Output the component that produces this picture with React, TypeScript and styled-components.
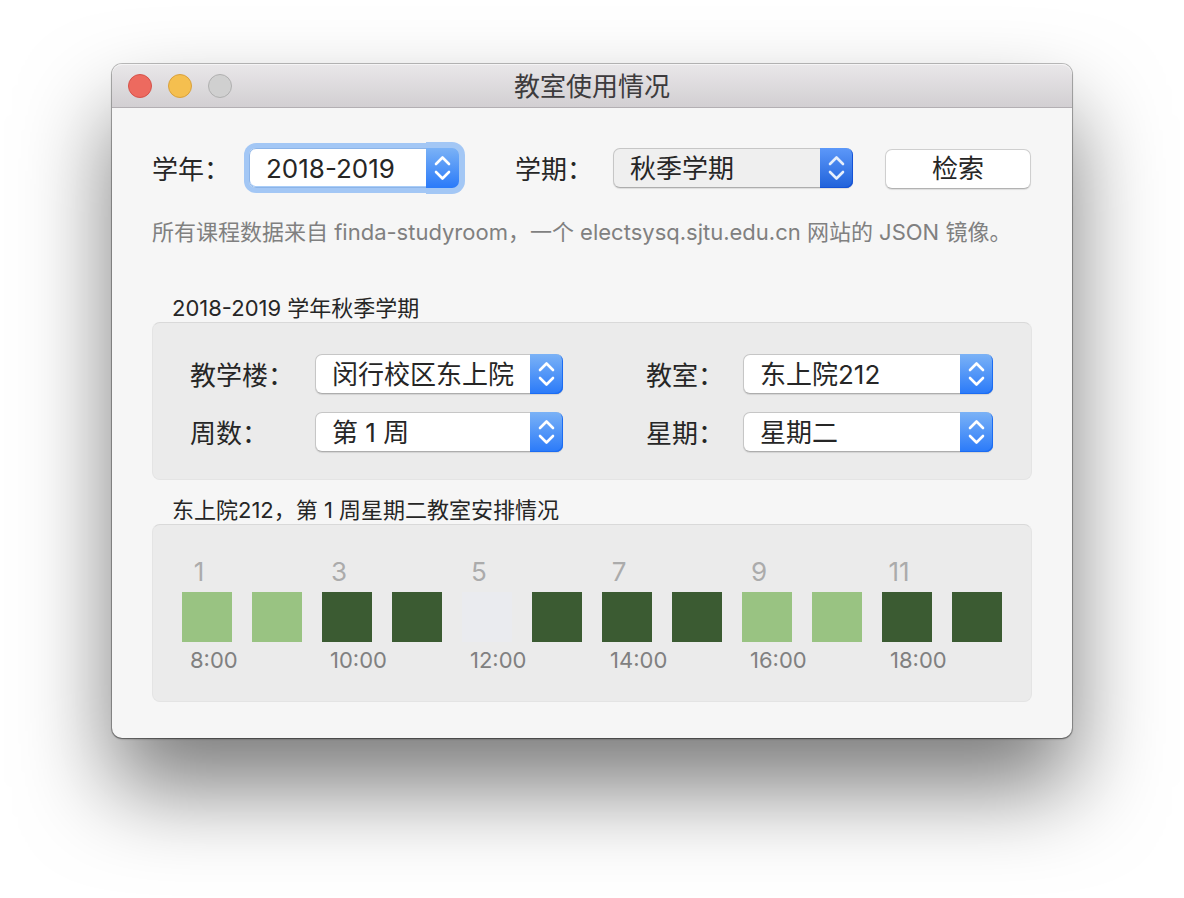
import React from "react";
import styled, { createGlobalStyle, css } from "styled-components";

const GlobalStyle = createGlobalStyle`
  *, *::before, *::after { box-sizing: border-box; }
  body {
    margin: 0;
    background: #ffffff;
    color: #262626;
    font-family: Inter, "Noto Sans CJK SC", sans-serif;
    font-size: 26px;
    line-height: 36px;
  }
`;

const Desktop = styled.div`
  padding: 64px 112px 160px;
`;

const Window = styled.main`
  border-radius: 10px;
  background: #f6f6f6;
  box-shadow:
    0 0 0 1px rgba(0, 0, 0, 0.24),
    0 1px 2px rgba(0, 0, 0, 0.4),
    0 50px 90px rgba(0, 0, 0, 0.52);
`;

const TitleBar = styled.header`
  display: grid;
  grid-template-columns: 1fr auto 1fr;
  align-items: center;
  height: 44px;
  padding: 0 16px;
  border-radius: 10px 10px 0 0;
  border-bottom: 1px solid #b3afb3;
  background: linear-gradient(#e9e7e9, #d2cfd2);
  box-shadow: inset 0 1px 0 #f5f4f5;
`;

const Lights = styled.div`
  display: flex;
  gap: 16px;
`;

const Light = styled.button<{ $fill: string; $edge: string }>`
  width: 24px;
  height: 24px;
  padding: 0;
  border: 1px solid ${(p) => p.$edge};
  border-radius: 50%;
  background: ${(p) => p.$fill};
`;

const Title = styled.h1`
  margin: 0;
  padding-top: 2px;
  color: #3d3b3d;
  font-size: 26px;
  font-weight: 400;
`;

const Content = styled.div`
  padding: 40px 40px 36px;
`;

const SearchForm = styled.form`
  display: grid;
  grid-template-columns: 97px 7fr 154px 8fr 178px;
  align-items: start;
  padding-right: 1px;
`;

const Label = styled.label<{ $indent?: number }>`
  padding-top: 5px;
  padding-left: ${(p) => p.$indent ?? 0}px;
  line-height: 34px;
  white-space: nowrap;
`;

const PopUp = styled.div<{ $focused?: boolean }>`
  position: relative;
  height: 40px;
  min-width: 0;
  border-radius: 7px;
  ${(p) =>
    p.$focused &&
    css`
      box-shadow: 0 0 0 5px #a3c7f5;
    `}
`;

const Select = styled.select<{ $pressed?: boolean; $focused?: boolean }>`
  appearance: none;
  display: block;
  width: 100%;
  height: 40px;
  padding: 2px 36px 0 16px;
  border: 1px solid #c6c6c6;
  border-bottom-color: #adadad;
  border-radius: 7px;
  outline: none;
  background: ${(p) => (p.$pressed ? "#efefef" : "#ffffff")};
  box-shadow: 0 1px 1px rgba(0, 0, 0, 0.1);
  color: #262626;
  font: inherit;
  ${(p) =>
    p.$focused &&
    css`
      border-color: #8cb4e8;
      box-shadow: inset 0 -1px 0 #a9cdf8;
    `}
`;

const Cap = styled.span<{ $pressed?: boolean; $focused?: boolean }>`
  position: absolute;
  top: 0;
  right: 0;
  display: flex;
  align-items: center;
  justify-content: center;
  width: 33px;
  height: 40px;
  border-radius: 0 7px 7px 0;
  background: ${(p) =>
    p.$pressed
      ? "linear-gradient(#5c98f9, #2062da)"
      : "linear-gradient(#7bb2f6, #2a7af9)"};
  box-shadow: inset -1px -1px 0 ${(p) => (p.$pressed ? "#1553d6" : "#1c6cf2")};
  pointer-events: none;
  ${(p) =>
    p.$focused &&
    css`
      box-shadow: 0 0 0 6px #a3c7f5;
      clip-path: inset(-6px -6px -6px 0);
    `}
`;

const SearchButton = styled.button`
  height: 40px;
  margin: 1px 0 0 32px;
  padding: 0;
  border: 1px solid #cfcfcf;
  border-bottom-color: #b2b2b2;
  border-radius: 7px;
  background: #ffffff;
  box-shadow: 0 1px 1px rgba(0, 0, 0, 0.1);
  color: #262626;
  font: inherit;
`;

const Note = styled.p`
  margin: 25px 0 0;
  color: #808080;
  font-size: 22px;
`;

const Group = styled.section<{ $gap: number }>`
  margin-top: ${(p) => p.$gap}px;
`;

const GroupTitle = styled.h2`
  margin: 0;
  padding-left: 20px;
  font-size: 22px;
  font-weight: 400;
  line-height: 28px;
`;

const Box = styled.div`
  border: 1px solid #e4e4e4;
  border-top-color: #d9d9d9;
  border-radius: 8px;
  background: #ebebeb;
`;

const Filters = styled(Box)`
  display: grid;
  grid-template-columns: 125px 124fr 180px 125fr;
  row-gap: 18px;
  padding: 31px 38px 27px 37px;
`;

const Schedule = styled(Box)`
  padding: 27px 29px;
`;

const Slots = styled.ol`
  display: grid;
  grid-template-columns: repeat(12, 1fr);
  gap: 20px;
  margin: 0;
  padding: 0;
  list-style: none;
`;

const Slot = styled.li`
  min-width: 0;
`;

const SlotNumber = styled.span`
  display: block;
  width: 34px;
  height: 40px;
  color: #ababab;
  line-height: 40px;
  text-align: center;
`;

const SlotSquare = styled.span<{ $color: string }>`
  display: block;
  aspect-ratio: 1;
  background: ${(p) => p.$color};
`;

const SlotTime = styled.time`
  display: block;
  height: 32px;
  padding-left: 8px;
  color: #808080;
  font-size: 22px;
  white-space: nowrap;
`;

type PickerProps = {
  id: string;
  label: string;
  value: string;
  indent?: number;
  pressed?: boolean;
  focused?: boolean;
};

function Picker({ id, label, value, indent, pressed, focused }: PickerProps) {
  return (
    <>
      <Label htmlFor={id} $indent={indent}>
        {label}
      </Label>
      <PopUp $focused={focused}>
        <Select id={id} $pressed={pressed} $focused={focused}>
          <option>{value}</option>
        </Select>
        <Cap $pressed={pressed} $focused={focused}>
          <svg
            width="17"
            height="26"
            viewBox="0 0 17 26"
            fill="none"
            stroke={pressed ? "#e6effc" : "#ffffff"}
            strokeWidth="2.6"
            strokeLinecap="round"
            strokeLinejoin="round"
            aria-hidden="true"
          >
            <path d="M2 9 8.5 2.5 15 9M2 17 8.5 23.5 15 17" />
          </svg>
        </Cap>
      </PopUp>
    </>
  );
}

const FREE = "#99c382";
const BUSY = "#3b5b32";
const BREAK = "#eaebef";

const slots = [FREE, FREE, BUSY, BUSY, BREAK, BUSY, BUSY, BUSY, FREE, FREE, BUSY, BUSY];

export default function App() {
  return (
    <>
      <GlobalStyle />
      <Desktop>
        <Window>
          <TitleBar>
            <Lights>
              <Light type="button" aria-label="关闭" $fill="#ed6a5f" $edge="#d5524a" />
              <Light type="button" aria-label="最小化" $fill="#f5bf4f" $edge="#d9a13c" />
              <Light type="button" aria-label="缩放" disabled $fill="#d0d0d0" $edge="#b0b0b0" />
            </Lights>
            <Title>教室使用情况</Title>
          </TitleBar>
          <Content>
            <SearchForm onSubmit={(e) => e.preventDefault()}>
              <Picker id="year" label="学年：" value="2018-2019" focused />
              <Picker id="term" label="学期：" value="秋季学期" indent={56} pressed />
              <SearchButton type="submit">检索</SearchButton>
            </SearchForm>
            <Note>所有课程数据来自 finda-studyroom，一个 electsysq.sjtu.edu.cn 网站的 JSON 镜像。</Note>
            <Group $gap={44}>
              <GroupTitle>2018-2019 学年秋季学期</GroupTitle>
              <Filters>
                <Picker id="building" label="教学楼：" value="闵行校区东上院" />
                <Picker id="room" label="教室：" value="东上院212" indent={83} />
                <Picker id="week" label="周数：" value="第 1 周" />
                <Picker id="day" label="星期：" value="星期二" indent={83} />
              </Filters>
            </Group>
            <Group $gap={16}>
              <GroupTitle>东上院212，第 1 周星期二教室安排情况</GroupTitle>
              <Schedule>
                <Slots>
                  {slots.map((color, i) => (
                    <Slot key={i}>
                      <SlotNumber>{i % 2 === 0 ? i + 1 : null}</SlotNumber>
                      <SlotSquare $color={color} />
                      {i % 2 === 0 && <SlotTime>{`${8 + i}:00`}</SlotTime>}
                    </Slot>
                  ))}
                </Slots>
              </Schedule>
            </Group>
          </Content>
        </Window>
      </Desktop>
    </>
  );
}
